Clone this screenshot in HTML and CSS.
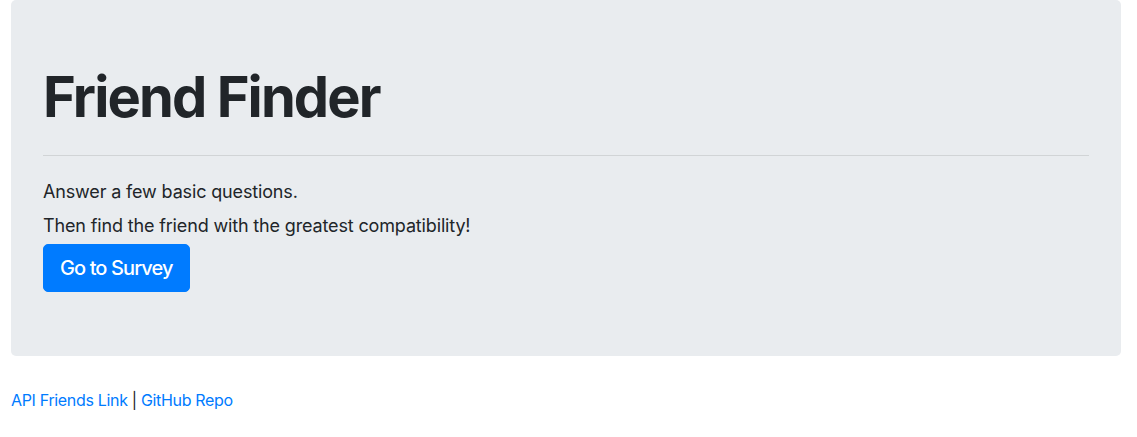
FILE: index.html
```html
<!DOCTYPE html>
<html lang="en">
<head>
<meta charset="utf-8">
<title>Friend Finder</title>
<link rel="stylesheet" href="styles.css">
</head>
<body>
<div class="container">
  <div class="jumbotron">
    <h1 class="title">Friend Finder</h1>
    <hr class="divider">
    <p class="lead first">Answer a few basic questions.</p>
    <p class="lead">Then find the friend with the greatest compatibility!</p>
    <a class="btn" href="#">Go to Survey</a>
  </div>
  <footer class="footer">
    <a href="#">API Friends Link</a> | <a href="#">GitHub Repo</a>
  </footer>
</div>
</body>
</html>
```
FILE: styles.css
```css
html, body {
  margin: 0;
  padding: 0;
  background: #fff;
}
body {
  font-family: Inter, "Noto Sans", "Liberation Sans", sans-serif;
  color: #212529;
  font-size: 16px;
  line-height: 1.5;
}
.container {
  width: 1110px;
  margin-left: 11px;
}
.jumbotron {
  background: #e9ecef;
  border-radius: 5px;
  padding: 64px 32px;
  margin-bottom: 32px;
}
.title {
  font-size: 56px;
  font-weight: 700;
  line-height: 67px;
  margin: 0;
  letter-spacing: -1.9px;
}
.divider {
  border: 0;
  border-top: 1px solid rgba(0, 0, 0, 0.1);
  margin: 24px 0 0;
}
.lead {
  font-size: 18px;
  line-height: 27px;
  margin: 0 0 7px;
  letter-spacing: -0.15px;
}
.lead.first {
  margin-top: 22px;
}
.btn {
  display: inline-block;
  margin-top: -2px;
  background: #007bff;
  color: #fff;
  text-decoration: none;
  font-size: 20px;
  font-weight: 500;
  line-height: 30px;
  padding: 8px 16px;
  border: 1px solid #007bff;
  border-radius: 5px;
  letter-spacing: -0.9px;
}
.footer {
  font-size: 16px;
  line-height: 24px;
  letter-spacing: -0.33px;
}
.footer a {
  color: #007bff;
  text-decoration: none;
}
```
